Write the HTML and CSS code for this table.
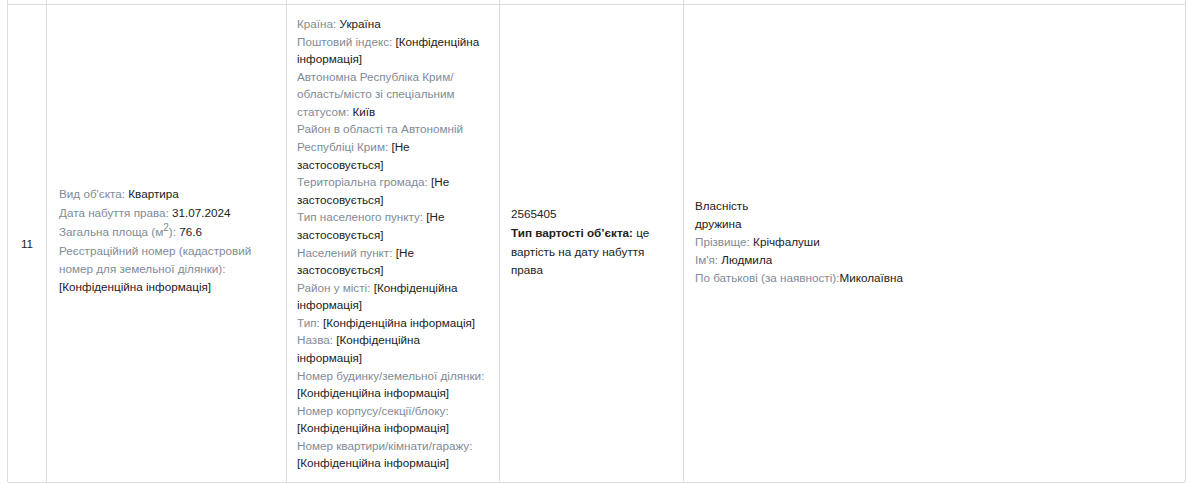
FILE: index.html
```html
<!DOCTYPE html>
<html lang="uk">
<head>
<meta charset="utf-8">
<link rel="stylesheet" href="styles.css">
</head>
<body>
<div class="table">
  <div class="row prev">
    <div class="cell"></div><div class="cell"></div><div class="cell"></div><div class="cell"></div><div class="cell"></div>
  </div>
  <div class="row main">
    <div class="cell num">11</div>
    <div class="cell obj">
      <div class="item"><span class="lbl">Вид об'єкта:</span> Квартира</div>
      <div class="item"><span class="lbl">Дата набуття права:</span> 31.07.2024</div>
      <div class="item"><span class="lbl">Загальна площа (м<sup>2</sup>):</span> 76.6</div>
      <div class="item"><span class="lbl">Реєстраційний номер (кадастровий номер для земельної ділянки):</span> [Конфіденційна інформація]</div>
    </div>
    <div class="cell addr">
      <div><span class="lbl">Країна:</span> Україна</div>
      <div><span class="lbl">Поштовий індекс:</span> [Конфіденційна інформація]</div>
      <div><span class="lbl">Автономна Республіка Крим/ область/місто зі спеціальним статусом:</span> Київ</div>
      <div><span class="lbl">Район в області та Автономній Республіці Крим:</span> [Не застосовується]</div>
      <div><span class="lbl">Територіальна громада:</span> [Не застосовується]</div>
      <div><span class="lbl">Тип населеного пункту:</span> [Не застосовується]</div>
      <div><span class="lbl">Населений пункт:</span> [Не застосовується]</div>
      <div><span class="lbl">Район у місті:</span> [Конфіденційна інформація]</div>
      <div><span class="lbl">Тип:</span> [Конфіденційна інформація]</div>
      <div><span class="lbl">Назва:</span> [Конфіденційна інформація]</div>
      <div><span class="lbl">Номер будинку/земельної ділянки:</span> [Конфіденційна інформація]</div>
      <div><span class="lbl">Номер корпусу/секції/блоку:</span> [Конфіденційна інформація]</div>
      <div><span class="lbl">Номер квартири/кімнати/гаражу:</span> [Конфіденційна інформація]</div>
    </div>
    <div class="cell cost">
      <div class="sum">2565405</div>
      <div><b>Тип вартості об’єкта:</b> це вартість на дату набуття права</div>
    </div>
    <div class="cell owner">
      <div>Власність</div>
      <div>дружина</div>
      <div><span class="lbl">Прізвище:</span> Крічфалуши</div>
      <div><span class="lbl">Ім'я:</span> Людмила</div>
      <div><span class="lbl">По батькові (за наявності):</span>Миколаївна</div>
    </div>
  </div>
</div>
</body>
</html>
```

FILE: styles.css
```css
* { box-sizing: border-box; }
body {
  margin: 0;
  background: #fff;
  font-family: "Liberation Sans", Arial, sans-serif;
  font-size: 11.7px;
  color: #222;
}
.table {
  margin-left: 7px;
  width: 1179px;
  border-right: 1px solid #dcdcdc;
  border-bottom: 1px solid #dcdcdc;
  border-radius: 0 0 3px 3px;
}
.row {
  display: grid;
  grid-template-columns: 39px 240px 213px 184px 502px;
}
.prev { height: 4px; }
.main { grid-template-rows: 478px; }
.cell {
  border-left: 1px solid #dcdcdc;
}
.main .cell {
  border-top: 1px solid #dcdcdc;
  padding: 10px 10px;
  display: flex;
  flex-direction: column;
  justify-content: center;
  overflow: hidden;
}
.lbl { color: #7f8b99; }
.num { align-items: center; padding-top: 10px !important; }
.obj { padding-left: 12px !important; padding-bottom: 16px !important; line-height: 18px; }
.obj .item { margin-bottom: 1px; }
.obj sup { font-size: 10px; line-height: 0; vertical-align: 5px; }
.addr { line-height: 17.58px; padding-right: 13px !important; }
.cost { padding-left: 11px !important; padding-right: 12px !important; line-height: 18.3px; padding-bottom: 13px !important; }
.cost .sum { margin-bottom: 1px; }
.cost b { font-weight: bold; }
.owner { padding-left: 11px !important; line-height: 18.1px; padding-bottom: 13px !important; }
```
